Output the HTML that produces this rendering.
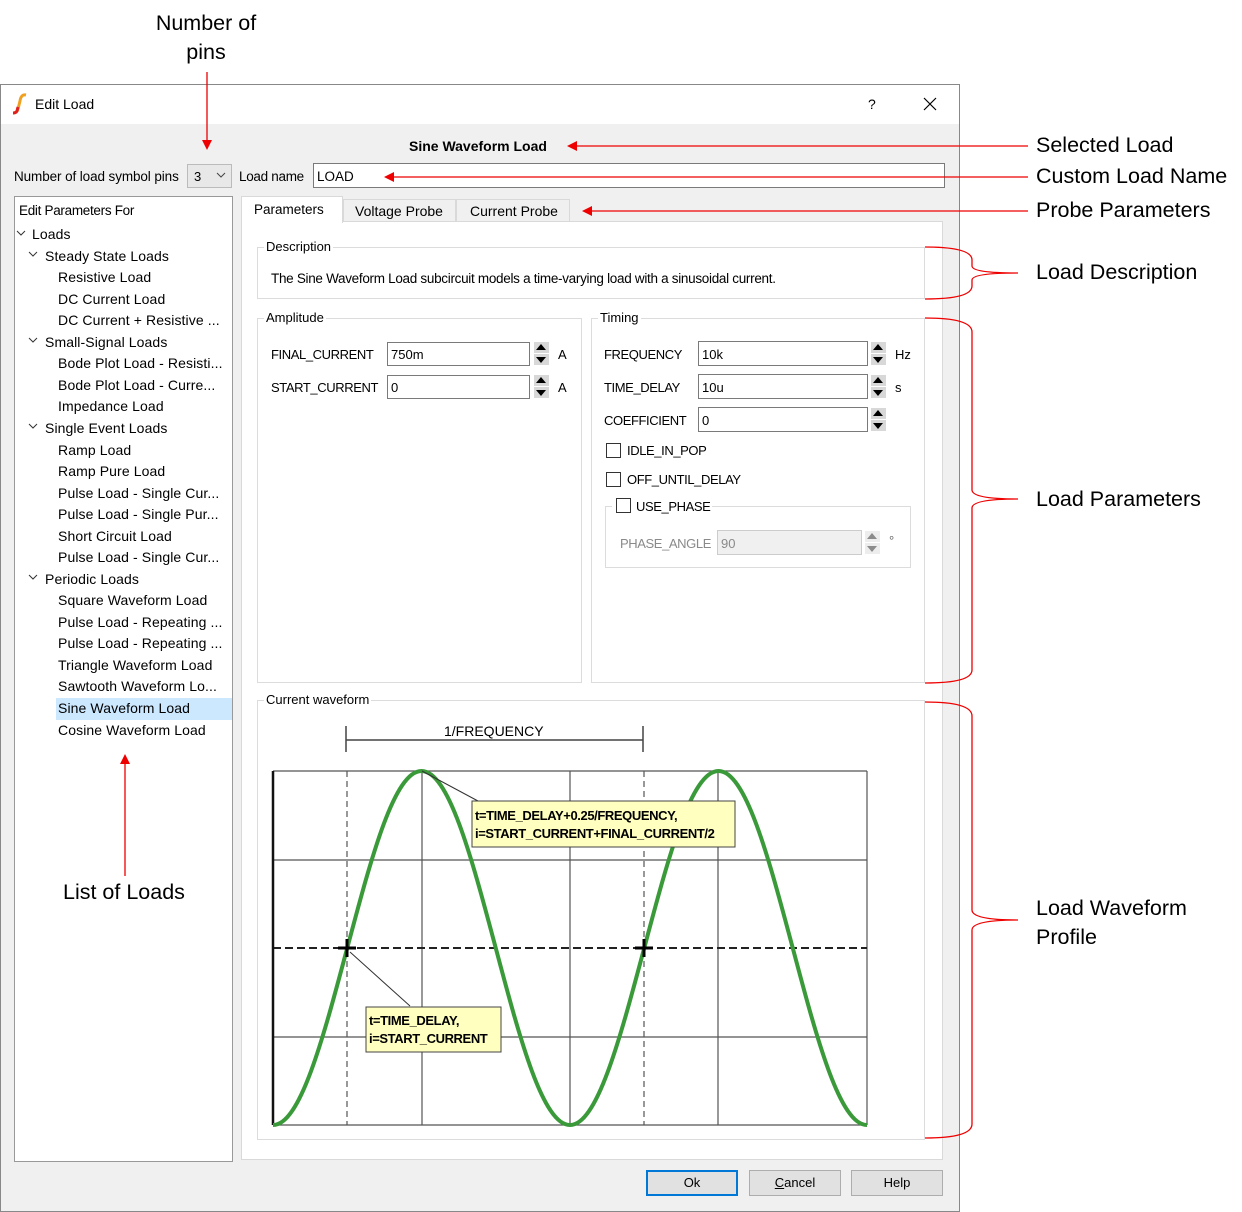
<!DOCTYPE html>
<html><head><meta charset="utf-8"><style>
*{margin:0;padding:0;box-sizing:border-box}
body{width:1242px;height:1212px;background:#fff;position:relative;overflow:hidden;font-family:"Liberation Sans",sans-serif;font-size:13px;color:#000}
.a{position:absolute;white-space:nowrap}
.ann{position:absolute;font-size:21.5px;white-space:nowrap;color:#000}
.box{position:absolute;background:#fff;border:1px solid #7a7a7a}
.grp{position:absolute;border:1px solid #dcdcdc}
.lg{position:absolute;background:#fff;padding:0 2px;top:-9px;left:6px;font-size:13px}
.spin{position:absolute;width:16px;height:24px}
.spin:before,.spin:after{content:"";position:absolute;left:1px;width:15px;height:11px;background:#d8d8d8}
.spin:before{top:0}.spin:after{top:12px}
.up{position:absolute;left:3px;top:2px;border-left:5px solid transparent;border-right:5px solid transparent;border-bottom:6px solid #000;z-index:1}
.dn{position:absolute;left:3px;top:15px;border-left:5px solid transparent;border-right:5px solid transparent;border-top:6px solid #000;z-index:1}
.cb{position:absolute;width:15px;height:15px;border:1px solid #333;background:#fff}
.btn{position:absolute;width:92px;height:26px;background:#e1e1e1;border:1px solid #adadad;text-align:center;line-height:24px;font-size:13px}
.tr{position:absolute;font-size:14px;white-space:nowrap;letter-spacing:0.1px}
</style></head><body>
<div class="ann" style="left:140px;top:9px;width:132px;text-align:center;line-height:29px">Number of<br>pins</div>

<!-- dialog -->
<div style="position:absolute;left:0;top:84px;width:960px;height:1128px;background:#f0f0f0;border:1px solid #888"></div>
<div style="position:absolute;left:1px;top:85px;width:958px;height:39px;background:#fff"></div>
<svg class="a" style="left:10px;top:92px" width="20" height="24"><path d="M16 3 Q11 2 10 9 L8 17 Q7 21 3 21" stroke="#f0a020" stroke-width="3" fill="none"/><path d="M8 15 L7 19 Q6 21 3 21" stroke="#e02020" stroke-width="3" fill="none"/></svg>
<div class="a" style="left:35px;top:96px;font-size:14px">Edit Load</div>
<div class="a" style="left:868px;top:96px;font-size:14px">?</div>
<svg class="a" style="left:923px;top:97px" width="14" height="14"><path d="M1 1L13 13M13 1L1 13" stroke="#000" stroke-width="1.2"/></svg>

<div class="a" style="left:409px;top:138px;font-weight:bold;font-size:14px">Sine Waveform Load</div>
<div class="a" style="left:14px;top:169px;font-size:13.5px;letter-spacing:-0.1px">Number of load symbol pins</div>
<div class="a" style="left:187px;top:164px;width:45px;height:24px;border:1px solid #bbb;background:#e8e8e8"></div>
<div class="a" style="left:194px;top:169px">3</div>
<svg class="a" style="left:216px;top:172px" width="10" height="7"><path d="M1 1L5 5L9 1" stroke="#444" fill="none"/></svg>
<div class="a" style="left:239px;top:169px;font-size:13.5px;letter-spacing:-0.3px">Load name</div>
<div class="box" style="left:313px;top:163px;width:632px;height:25px"></div>
<div class="a" style="left:317px;top:169px;font-size:13.5px">LOAD</div>

<!-- tree -->
<div class="box" style="left:14px;top:196px;width:219px;height:966px;border-color:#999"></div>
<div class="tr" style="left:19px;top:203px;font-size:13.5px;letter-spacing:-0.3px">Edit Parameters For</div>
<div style="position:absolute;left:56px;top:698px;width:176px;height:22px;background:#cce8ff"></div>
<svg class="a" style="left:16px;top:230px" width="30" height="370">
<path d="M1 1L5 5L9 1" stroke="#333" fill="none"/>
<path d="M13 22L17 26L21 22" stroke="#333" fill="none"/>
<path d="M13 108L17 112L21 108" stroke="#333" fill="none"/>
<path d="M13 194L17 198L21 194" stroke="#333" fill="none"/>
<path d="M13 345L17 349L21 345" stroke="#333" fill="none"/>
</svg>
<div class="tr" style="left:32px;top:226px">Loads</div>
<div class="tr" style="left:45px;top:248px">Steady State Loads</div>
<div class="tr" style="left:58px;top:269px">Resistive Load</div>
<div class="tr" style="left:58px;top:291px">DC Current Load</div>
<div class="tr" style="left:58px;top:312px">DC Current + Resistive ...</div>
<div class="tr" style="left:45px;top:334px">Small-Signal Loads</div>
<div class="tr" style="left:58px;top:355px">Bode Plot Load - Resisti...</div>
<div class="tr" style="left:58px;top:377px">Bode Plot Load - Curre...</div>
<div class="tr" style="left:58px;top:398px">Impedance Load</div>
<div class="tr" style="left:45px;top:420px">Single Event Loads</div>
<div class="tr" style="left:58px;top:442px">Ramp Load</div>
<div class="tr" style="left:58px;top:463px">Ramp Pure Load</div>
<div class="tr" style="left:58px;top:485px">Pulse Load - Single Cur...</div>
<div class="tr" style="left:58px;top:506px">Pulse Load - Single Pur...</div>
<div class="tr" style="left:58px;top:528px">Short Circuit Load</div>
<div class="tr" style="left:58px;top:549px">Pulse Load - Single Cur...</div>
<div class="tr" style="left:45px;top:571px">Periodic Loads</div>
<div class="tr" style="left:58px;top:592px">Square Waveform Load</div>
<div class="tr" style="left:58px;top:614px">Pulse Load - Repeating ...</div>
<div class="tr" style="left:58px;top:635px">Pulse Load - Repeating ...</div>
<div class="tr" style="left:58px;top:657px">Triangle Waveform Load</div>
<div class="tr" style="left:58px;top:678px">Sawtooth Waveform Lo...</div>
<div class="tr" style="left:58px;top:700px">Sine Waveform Load</div>
<div class="tr" style="left:58px;top:722px">Cosine Waveform Load</div>

<!-- tabs -->
<div style="position:absolute;left:241px;top:221px;width:702px;height:939px;background:#fff;border:1px solid #d9d9d9"></div>
<div style="position:absolute;left:241px;top:196px;width:102px;height:27px;background:#fff;border:1px solid #d9d9d9;border-bottom:none"></div>
<div class="a" style="left:254px;top:202px;font-size:13.5px">Parameters</div>
<div style="position:absolute;left:343px;top:199px;width:113px;height:23px;background:#f0f0f0;border:1px solid #d9d9d9"></div>
<div class="a" style="left:355px;top:203px;font-size:14px">Voltage Probe</div>
<div style="position:absolute;left:456px;top:199px;width:114px;height:23px;background:#f0f0f0;border:1px solid #d9d9d9"></div>
<div class="a" style="left:470px;top:203px;font-size:14px">Current Probe</div>

<div class="grp" style="left:257px;top:247px;width:668px;height:52px"><span class="lg">Description</span></div>
<div class="a" style="left:271px;top:271px;font-size:13.5px;letter-spacing:-0.3px">The Sine Waveform Load subcircuit models a time-varying load with a sinusoidal current.</div>

<div class="grp" style="left:257px;top:318px;width:325px;height:365px"><span class="lg">Amplitude</span></div>
<div class="a" style="left:271px;top:347px;letter-spacing:-0.4px">FINAL_CURRENT</div>
<div class="box" style="left:387px;top:342px;width:143px;height:24px"></div>
<div class="a" style="left:391px;top:347px">750m</div>
<div class="spin" style="left:533px;top:342px"><i class="up"></i><i class="dn"></i></div>
<div class="a" style="left:558px;top:347px">A</div>
<div class="a" style="left:271px;top:380px;letter-spacing:-0.4px">START_CURRENT</div>
<div class="box" style="left:387px;top:375px;width:143px;height:24px"></div>
<div class="a" style="left:391px;top:380px">0</div>
<div class="spin" style="left:533px;top:375px"><i class="up"></i><i class="dn"></i></div>
<div class="a" style="left:558px;top:380px">A</div>

<div class="grp" style="left:591px;top:318px;width:334px;height:365px"><span class="lg">Timing</span></div>
<div class="a" style="left:604px;top:347px;letter-spacing:-0.4px">FREQUENCY</div>
<div class="box" style="left:698px;top:341px;width:170px;height:25px"></div>
<div class="a" style="left:702px;top:347px">10k</div>
<div class="spin" style="left:870px;top:342px"><i class="up"></i><i class="dn"></i></div>
<div class="a" style="left:895px;top:347px">Hz</div>
<div class="a" style="left:604px;top:380px;letter-spacing:-0.4px">TIME_DELAY</div>
<div class="box" style="left:698px;top:374px;width:170px;height:25px"></div>
<div class="a" style="left:702px;top:380px">10u</div>
<div class="spin" style="left:870px;top:375px"><i class="up"></i><i class="dn"></i></div>
<div class="a" style="left:895px;top:380px">s</div>
<div class="a" style="left:604px;top:413px;letter-spacing:-0.4px">COEFFICIENT</div>
<div class="box" style="left:698px;top:407px;width:170px;height:25px"></div>
<div class="a" style="left:702px;top:413px">0</div>
<div class="spin" style="left:870px;top:408px"><i class="up"></i><i class="dn"></i></div>
<div class="cb" style="left:606px;top:443px"></div>
<div class="a" style="left:627px;top:443px;letter-spacing:-0.4px">IDLE_IN_POP</div>
<div class="cb" style="left:606px;top:472px"></div>
<div class="a" style="left:627px;top:472px;letter-spacing:-0.4px">OFF_UNTIL_DELAY</div>
<div class="grp" style="left:605px;top:506px;width:306px;height:62px"></div>
<div style="position:absolute;left:612px;top:497px;width:100px;height:18px;background:#fff"></div>
<div class="cb" style="left:616px;top:498px"></div>
<div class="a" style="left:636px;top:499px;letter-spacing:-0.4px">USE_PHASE</div>
<div class="a" style="left:620px;top:536px;color:#8a8a8a;letter-spacing:-0.4px">PHASE_ANGLE</div>
<div class="a" style="left:717px;top:530px;width:145px;height:25px;background:#f0f0f0;border:1px solid #ccc"></div>
<div class="a" style="left:721px;top:536px;color:#8a8a8a">90</div>
<div class="spin" style="left:864px;top:531px;opacity:.45"><i class="up"></i><i class="dn"></i></div>
<div class="a" style="left:889px;top:533px;color:#666">°</div>

<div class="grp" style="left:257px;top:700px;width:668px;height:440px"><span class="lg">Current waveform</span></div>
<svg class="a" style="left:0;top:0" width="960" height="1212">
<g stroke="#555" stroke-width="1.2" fill="none">
<path d="M273 771H867M273 860H867M273 1037H867M273 1125H867M422 771V1125M570 771V1125M718 771V1125M867 771V1125"/>
<path d="M347 771V1125M644 771V1125" stroke-dasharray="6 4"/>
<path d="M346 740H643M346 726V752M643 726V752" stroke="#444" stroke-width="1.5"/>
</g>
<path d="M273 948H867" stroke="#222" stroke-width="2" stroke-dasharray="8 4"/>
<path d="M273 771V1125" stroke="#111" stroke-width="2.5"/>
<g fill="none" stroke="#3a9a3a" stroke-width="4">
<path id="w" d="M273 1125C300 1125 322.5 1040.7 347.25 948C371.9 855.3 394.5 771 421.5 771C448.5 771 471 855.3 495.75 948C520.4 1040.7 543 1125 570 1125"/>
<use href="#w" transform="translate(297,0)"/>
</g>
<path d="M338 948H356M347 939V957M635 948H653M644 939V957" stroke="#000" stroke-width="3"/>
<path d="M422 771L478 801M350 952L410 1006" stroke="#333" stroke-width="1"/>
<rect x="472" y="801" width="263" height="46" fill="#ffffc0" stroke="#444"/>
<rect x="366" y="1007" width="135" height="45" fill="#ffffc0" stroke="#444"/>
<text x="475" y="820" font-family="Liberation Sans Narrow, Liberation Sans" font-weight="bold" font-size="13" letter-spacing="-0.4">t=TIME_DELAY+0.25/FREQUENCY,</text>
<text x="475" y="838" font-family="Liberation Sans Narrow, Liberation Sans" font-weight="bold" font-size="13" letter-spacing="-0.4">i=START_CURRENT+FINAL_CURRENT/2</text>
<text x="369" y="1025" font-family="Liberation Sans Narrow, Liberation Sans" font-weight="bold" font-size="13" letter-spacing="-0.4">t=TIME_DELAY,</text>
<text x="369" y="1043" font-family="Liberation Sans Narrow, Liberation Sans" font-weight="bold" font-size="13" letter-spacing="-0.4">i=START_CURRENT</text>
<text x="444" y="736" font-family="Liberation Sans" font-size="14">1/FREQUENCY</text>
</svg>

<div class="btn" style="left:646px;top:1170px;border:2px solid #0078d7;line-height:22px">Ok</div>
<div class="btn" style="left:749px;top:1170px"><u>C</u>ancel</div>
<div class="btn" style="left:851px;top:1170px">Help</div>

<!-- annotations -->
<svg class="a" style="left:0;top:0" width="1242" height="1212">
<g stroke="#e00" stroke-width="1.3" fill="none">
<path d="M207 72V142M125 760V876M576 146H1028M393 177H1028M590 211H1028"/>
<path d="M925 247Q972 247 972 260V266Q972 273 1018 273Q972 273 972 280V286Q972 299 925 299"/>
<path d="M925 318Q972 318 972 332V490Q972 499 1018 499Q972 499 972 508V670Q972 683 925 683"/>
<path d="M925 702Q972 702 972 716V910Q972 920 1018 920Q972 920 972 930V1124Q972 1138 925 1138"/>
</g>
<g fill="#e00">
<path d="M202 140L207 150L212 140Z"/><path d="M120 764L125 754L130 764Z"/>
<path d="M577 141L567 146L577 151Z"/><path d="M394 172L384 177L394 182Z"/><path d="M592 206L582 211L592 216Z"/>
</g>
</svg>
<div class="ann" style="left:1036px;top:133px">Selected Load</div>
<div class="ann" style="left:1036px;top:164px">Custom Load Name</div>
<div class="ann" style="left:1036px;top:198px">Probe Parameters</div>
<div class="ann" style="left:1036px;top:260px">Load Description</div>
<div class="ann" style="left:1036px;top:487px">Load Parameters</div>
<div class="ann" style="left:1036px;top:894px;line-height:29px">Load Waveform<br>Profile</div>
<div class="ann" style="left:63px;top:880px">List of Loads</div>
</body></html>
